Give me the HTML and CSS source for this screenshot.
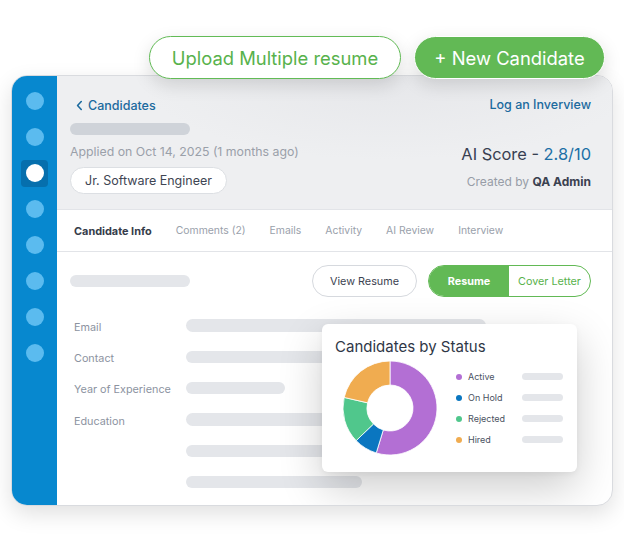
FILE: index.html
```html
<!DOCTYPE html>
<html lang="en">
<head>
<meta charset="utf-8">
<title>Candidate</title>
<link rel="stylesheet" href="styles.css">
</head>
<body>
<div class="stage">
  <div class="actions">
    <button class="btn btn-outline">Upload Multiple resume</button>
    <button class="btn btn-solid">+ New Candidate</button>
  </div>

  <div class="card">
    <nav class="rail">
      <span class="rail-item"><i class="dot"></i></span>
      <span class="rail-item"><i class="dot"></i></span>
      <span class="rail-item is-active"><i class="dot"></i></span>
      <span class="rail-item"><i class="dot"></i></span>
      <span class="rail-item"><i class="dot"></i></span>
      <span class="rail-item"><i class="dot"></i></span>
      <span class="rail-item"><i class="dot"></i></span>
      <span class="rail-item"><i class="dot"></i></span>
    </nav>

    <main class="panel">
      <header class="head">
        <div class="head-left">
          <a class="back">
            <svg class="chev" viewBox="0 0 8 12" width="7" height="11"><path d="M6 1.5 1.8 6 6 10.5" fill="none" stroke="currentColor" stroke-width="1.8" stroke-linecap="round" stroke-linejoin="round"/></svg>
            Candidates
          </a>
          <span class="skel skel-name"></span>
          <p class="applied">Applied on Oct 14, 2025 (1 months ago)</p>
          <span class="role">Jr. Software Engineer</span>
        </div>
        <div class="head-right">
          <a class="link">Log an Inverview</a>
          <p class="score">AI Score - <span class="score-val">2.8/10</span></p>
          <p class="creator">Created by <b>QA Admin</b></p>
        </div>
      </header>

      <div class="tabs">
        <span class="tab is-active">Candidate Info</span>
        <span class="tab">Comments (2)</span>
        <span class="tab">Emails</span>
        <span class="tab">Activity</span>
        <span class="tab">AI Review</span>
        <span class="tab">Interview</span>
      </div>

      <section class="body">
        <div class="toolbar">
          <span class="skel skel-title"></span>
          <button class="pill-btn">View Resume</button>
          <div class="toggle">
            <span class="toggle-opt is-on">Resume</span>
            <span class="toggle-opt">Cover Letter</span>
          </div>
        </div>

        <div class="fields">
          <span class="label">Email</span><span class="skel bar bar-long"></span>
          <span class="label">Contact</span><span class="skel bar bar-long"></span>
          <span class="label">Year of Experience</span><span class="skel bar bar-short"></span>
          <span class="label">Education</span><span class="skel bar bar-long"></span>
          <span class="label"></span><span class="skel bar bar-long"></span>
          <span class="label"></span><span class="skel bar bar-mid"></span>
        </div>

        <div class="chart-card">
          <h3 class="chart-title">Candidates by Status</h3>
          <div class="chart-body">
            <svg class="donut" viewBox="0 0 94 94" width="94" height="94">
              <g stroke="#fff" stroke-width="0.8">
                <path fill="#b36fd4" d="M47 0A47 47 0 1 1 33.26 91.95L40.27 68.99A23 23 0 1 0 47 24Z"/>
                <path fill="#0a76c0" d="M33.26 91.95A47 47 0 0 1 13.19 79.65L30.46 62.98A23 23 0 0 0 40.27 68.99Z"/>
                <path fill="#50c78c" d="M13.19 79.65A47 47 0 0 1 1.2 36.43L24.59 41.83A23 23 0 0 0 30.46 62.98Z"/>
                <path fill="#f0ac50" d="M1.2 36.43A47 47 0 0 1 47 0L47 24A23 23 0 0 0 24.59 41.83Z"/>
              </g>
            </svg>
            <ul class="legend">
              <li><i class="ldot ldot-active"></i><span>Active</span><em class="lbar"></em></li>
              <li><i class="ldot ldot-hold"></i><span>On Hold</span><em class="lbar"></em></li>
              <li><i class="ldot ldot-rejected"></i><span>Rejected</span><em class="lbar"></em></li>
              <li><i class="ldot ldot-hired"></i><span>Hired</span><em class="lbar"></em></li>
            </ul>
          </div>
        </div>
      </section>
    </main>
  </div>
</div>
</body>
</html>
```

FILE: styles.css
```css
* { box-sizing: border-box; }

html, body {
  margin: 0;
  background: #ffffff;
}

body {
  width: 624px;
  height: 550px;
  overflow: hidden;
  font-family: "Inter", "Lato", sans-serif;
  color: #333b4a;
}

p { margin: 0; }

.stage {
  padding-top: 36px;
}

/* top action buttons */
.actions {
  position: relative;
  z-index: 3;
  display: flex;
  gap: 13px;
  margin-left: 149px;
}

.btn {
  height: 43px;
  border-radius: 22px;
  font-family: inherit;
  font-size: 18.4px;
  font-weight: 400;
  padding: 0;
  white-space: nowrap;
  box-shadow: 0 6px 18px rgba(0, 0, 0, 0.13);
}

.btn-outline {
  width: 252px;
  background: #ffffff;
  border: 1.5px solid #62bb56;
  color: #58b24c;
}

.btn-solid {
  width: 191px;
  background: #62b955;
  border: 1.5px solid #ffffff;
  color: #ffffff;
}

/* main card */
.card {
  position: relative;
  margin: -4px 0 0 11px;
  width: 602px;
  height: 431px;
  border: 1px solid #d9dbdf;
  border-radius: 16px;
  overflow: hidden;
  display: grid;
  grid-template-columns: 45px 1fr;
  background: #ffffff;
  box-shadow: 0 8px 22px rgba(0, 0, 0, 0.12);
}

.rail {
  background: #0788cf;
  display: flex;
  flex-direction: column;
  padding-top: 7px;
}

.rail-item {
  position: relative;
  height: 36px;
  display: flex;
  align-items: center;
  justify-content: center;
}

.dot {
  position: relative;
  width: 18px;
  height: 18px;
  border-radius: 50%;
  background: #5bbbef;
}

/* selected entry: white dot on a darker tile */
.rail-item.is-active::before {
  content: "";
  position: absolute;
  width: 27px;
  height: 27px;
  border-radius: 4px;
  background: #066fad;
}

.rail-item.is-active .dot {
  background: #ffffff;
}

.panel {
  position: relative;
  display: flex;
  flex-direction: column;
  min-width: 0;
}

/* header */
.head {
  height: 134px;
  display: flex;
  justify-content: space-between;
  padding: 21px 21px 0 13px;
  border-bottom: 1px solid #e2e4e8;
  background: radial-gradient(ellipse 360px 120px at 60% 0%, #e6e7ea 0%, #eeeff1 70%) #f0f1f3;
}

.head-left {
  display: flex;
  flex-direction: column;
  align-items: flex-start;
}

.back {
  display: flex;
  align-items: center;
  gap: 5px;
  height: 16px;
  padding-left: 6px;
  font-size: 12.5px;
  font-weight: 500;
  color: #1b6a9e;
}

.skel {
  display: block;
  border-radius: 7px;
  background: #e4e6ea;
}

.skel-name {
  margin-top: 10px;
  width: 120px;
  height: 12px;
  background: #cfd3d9;
}

.applied {
  margin-top: 8px;
  font-size: 12.3px;
  line-height: 18px;
  color: #9aa0a9;
}

.role {
  margin-top: 6px;
  height: 27px;
  display: flex;
  align-items: center;
  padding: 0 14px;
  border: 1px solid #dcdfe3;
  border-radius: 14px;
  background: #ffffff;
  font-size: 12.5px;
  color: #3e4553;
}

.head-right {
  display: flex;
  flex-direction: column;
  align-items: flex-end;
}

.link {
  height: 16px;
  line-height: 16px;
  font-size: 12.5px;
  font-weight: 500;
  color: #1b6a9e;
}

.score {
  margin-top: 30px;
  line-height: 22px;
  font-size: 16.4px;
  color: #384051;
}

.score-val { color: #1c6fa6; }

.creator {
  margin-top: 9px;
  line-height: 16px;
  font-size: 12px;
  color: #979da7;
}

.creator b {
  font-weight: 700;
  color: #3a4150;
}

/* tabs */
.tabs {
  height: 42px;
  display: flex;
  align-items: center;
  gap: 24px;
  padding-left: 17px;
  border-bottom: 1px solid #e2e4e8;
}

.tab {
  font-size: 10.4px;
  color: #9aa1ab;
}

.tab.is-active {
  font-size: 10.9px;
  font-weight: 700;
  color: #353c4a;
}

/* body */
.body {
  position: relative;
  flex: 1;
  padding: 13px 21px 0 13px;
}

.toolbar {
  display: flex;
  align-items: center;
  height: 32px;
}

.skel-title {
  width: 120px;
  height: 12px;
  margin-right: auto;
}

.pill-btn {
  height: 32px;
  width: 105px;
  margin-right: 11px;
  border: 1px solid #d6d9de;
  border-radius: 16px;
  background: #ffffff;
  font-family: inherit;
  font-size: 10.8px;
  color: #3c4351;
}

.toggle {
  display: flex;
  height: 32px;
  width: 163px;
  border: 1px solid #62b955;
  border-radius: 16px;
  overflow: hidden;
}

.toggle-opt {
  flex: 1;
  display: flex;
  align-items: center;
  justify-content: center;
  font-size: 10.8px;
  color: #58b24c;
}

.toggle-opt.is-on {
  flex: 0 0 80px;
  background: #62b955;
  color: #ffffff;
  font-weight: 700;
}

.fields {
  margin-top: 13px;
  display: grid;
  grid-template-columns: 112px 1fr;
  grid-auto-rows: 31.3px;
  align-items: center;
  padding-left: 4px;
}

.label {
  font-size: 10.8px;
  color: #8c939f;
  padding-top: 3px;
}

.bar {
  height: 12.5px;
  border-radius: 7px;
}

.bar-long { width: 300px; }
.bar-short { width: 99px; }
.bar-mid { width: 176px; }

/* status chart popover */
.chart-card {
  position: absolute;
  left: 265px;
  top: 72px;
  width: 255px;
  height: 148px;
  background: #ffffff;
  border-radius: 6px;
  padding: 13px 13px 0 13px;
  box-shadow: 0 16px 44px rgba(0, 0, 0, 0.2), 0 2px 6px rgba(0, 0, 0, 0.05);
}

.chart-title {
  margin: 0;
  font-size: 15px;
  font-weight: 400;
  line-height: 20px;
  color: #2f3747;
}

.chart-body {
  display: flex;
  align-items: center;
  margin-top: 4px;
  padding-left: 8px;
}

.donut {
  display: block;
  flex: none;
}

.legend {
  list-style: none;
  margin: 0 0 0 19px;
  padding: 0;
  display: flex;
  flex-direction: column;
  gap: 7px;
}

.legend li {
  display: flex;
  align-items: center;
  height: 14px;
  font-size: 9px;
  color: #4a5161;
}

.legend span { width: 54px; }

.ldot {
  width: 6px;
  height: 6px;
  border-radius: 50%;
  margin-right: 6px;
}

.ldot-active { background: #b36fd4; }
.ldot-hold { background: #0a76c0; }
.ldot-rejected { background: #50c78c; }
.ldot-hired { background: #f0ac50; }

.lbar {
  width: 41px;
  height: 7px;
  border-radius: 4px;
  background: #e4e6ea;
}
```
